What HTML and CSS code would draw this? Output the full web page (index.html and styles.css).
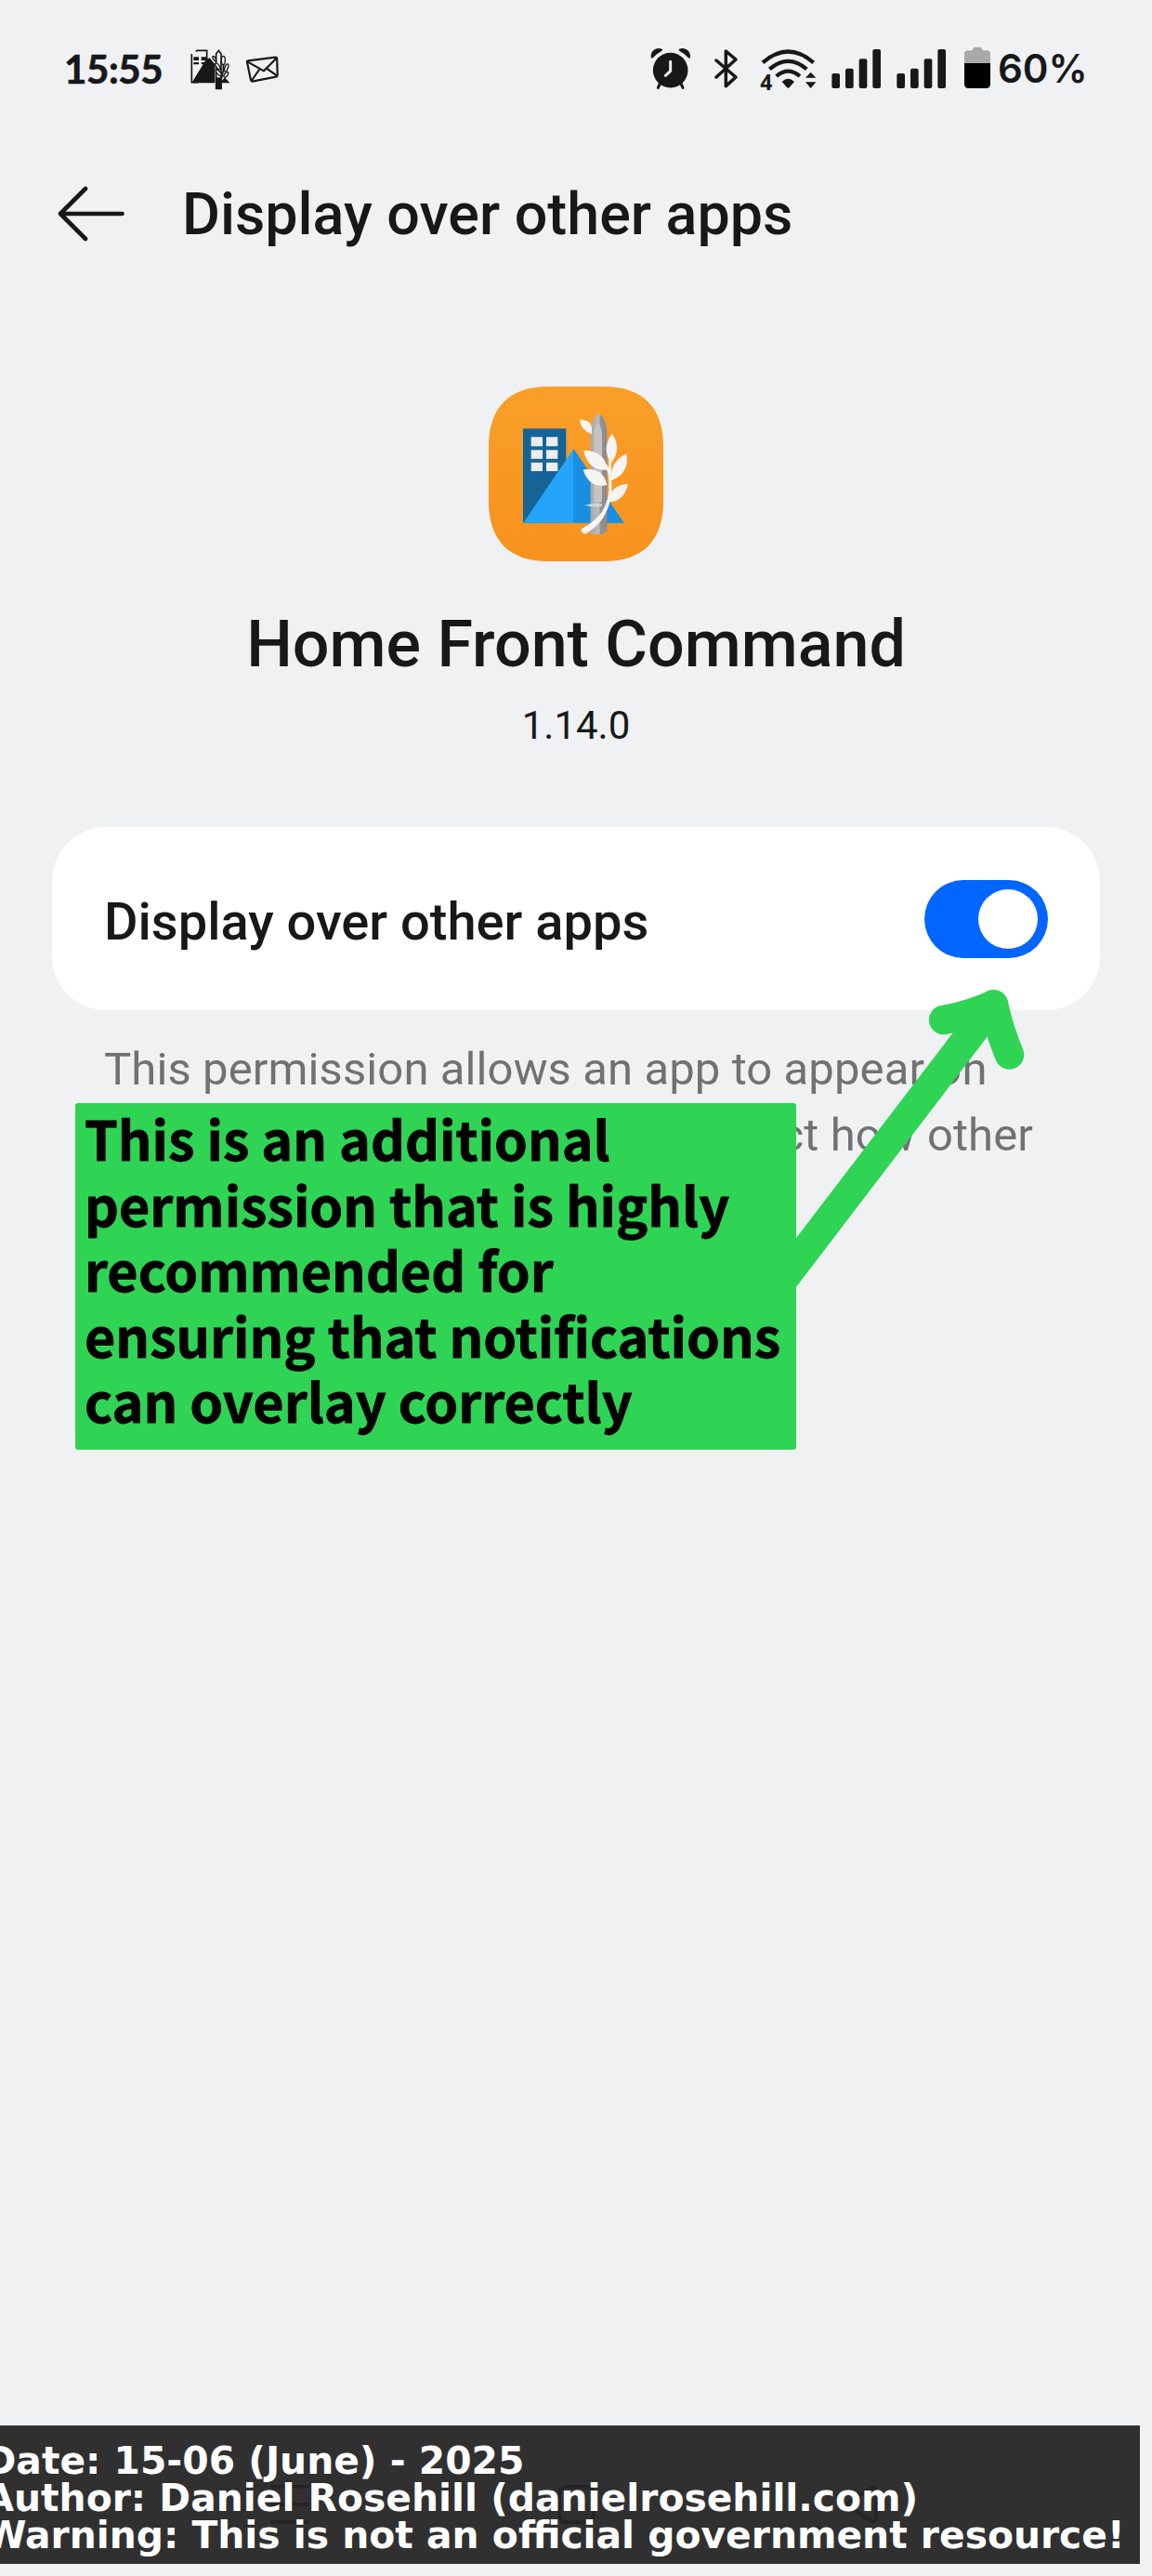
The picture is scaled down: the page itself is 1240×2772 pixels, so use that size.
FILE: index.html
```html
<!DOCTYPE html>
<html lang="en">
<head>
<meta charset="utf-8">
<title>Display over other apps</title>
<link rel="stylesheet" href="styles.css">
</head>
<body>
<main class="screen">
  <div class="status">
    <span class="time">15:55</span>
    <svg class="i-app" width="43" height="48" viewBox="495 60 129 144">
      <path d="M499 84V176H520M512 76L518 73H548V110" fill="none" stroke="#17181a" stroke-width="5"/>
      <path d="M505 94h17v11h-17zM530 94h16v11h-16zM505 111h17v7h-17zM530 111h14v7h-14z" fill="#17181a"/>
      <path d="M499 178L545 103L557 97L574 118V178ZM590 178L606 160L622 178Z" fill="#17181a"/>
      <path d="M578 196V84L586 73L594 84V196Z" fill="#f0f1f3" stroke="#17181a" stroke-width="5"/>
      <path d="M576 160h20v36h-20z" fill="#17181a"/>
      <g fill="#f0f1f3" stroke="#17181a" stroke-width="4">
        <ellipse cx="572" cy="99" rx="4" ry="8" transform="rotate(-30 572 99)"/>
        <ellipse cx="601" cy="105" rx="6" ry="14"/>
        <ellipse cx="583" cy="124" rx="5" ry="12" transform="rotate(-35 583 124)"/>
        <ellipse cx="611" cy="129" rx="5" ry="13" transform="rotate(20 611 129)"/>
        <ellipse cx="586" cy="145" rx="5" ry="12" transform="rotate(-40 586 145)"/>
        <ellipse cx="610" cy="151" rx="5" ry="10" transform="rotate(35 610 151)"/>
      </g>
      <path d="M602 116Q602 160 584 184" fill="none" stroke="#17181a" stroke-width="5"/>
    </svg>
    <svg class="i-mail" width="37" height="48" viewBox="671 60 111 144" fill="none" stroke="#17181a" stroke-width="6.5" stroke-linejoin="round">
      <path d="M680 106L768 95Q773 95 773.500 99L775 152Q775 157 770 158L694 173Q690 173 689 169L677 111Q676 107 680 106Z"/>
      <path d="M678 109L731 139L773 97M691 171L718 132M774 155L740 131"/>
    </svg>
    <svg class="i-alarm" width="44" height="48" viewBox="60 60 132 144">
      <g fill="#17181a"><circle cx="125" cy="137" r="56.500"/>
      <path d="M62 94C60 74 80 60 98 68Q101 72 96 75Q79 84 68 97Q62 101 62 94ZM189 94C191 74 171 60 153 68Q150 72 155 75Q172 84 183 97Q189 101 189 94Z"/></g>
      <path d="M91 180L85 193M159 180L165 193" stroke="#17181a" stroke-width="9" stroke-linecap="round"/>
      <path d="M125 109V139L109 154" fill="none" stroke="#f0f1f3" stroke-width="9" stroke-linecap="round" stroke-linejoin="round"/>
    </svg>
    <svg class="i-bt" width="26" height="48" viewBox="266 60 78 144" fill="none" stroke="#17181a" stroke-width="10.500" stroke-linecap="round" stroke-linejoin="round">
      <path d="M272 105L335 159L303 188V75L335 102L272 159"/>
    </svg>
    <svg class="i-wifi" width="61" height="48" viewBox="415 60 183 144">
      <g fill="none" stroke="#17181a" stroke-width="12.500">
        <path d="M424 112Q506 41 588 112"/><path d="M446 133Q506 82 566 133"/><path d="M468 156Q506 124 544 156"/>
      </g>
      <path d="M486 174Q506 155 526 174L510 192Q506 196 502 192ZM579 143L596 161H562ZM562 175H596L579 195Z" fill="#17181a"/>
      <text class="wifi-gen" x="416" y="201">4</text>
    </svg>
    <svg class="i-sig" width="54" height="48" viewBox="45 60 162 144" fill="#17181a">
      <rect x="46" y="147" width="26" height="48" rx="6"/><rect x="90" y="131" width="26" height="64" rx="6"/><rect x="134" y="100" width="26" height="95" rx="6"/><rect x="178" y="69" width="26" height="126" rx="6"/>
    </svg>
    <svg class="i-sig" width="54" height="48" viewBox="45 60 162 144" fill="#17181a">
      <rect x="46" y="147" width="26" height="48" rx="6"/><rect x="90" y="131" width="26" height="64" rx="6"/><rect x="134" y="100" width="26" height="95" rx="6"/><rect x="178" y="69" width="26" height="126" rx="6"/>
    </svg>
    <svg class="i-bat" width="28" height="48" viewBox="474 60 84 144">
      <path d="M474 114V84Q474 73 485 73H496Q500 73 501 68Q503 62 509 62H524Q530 62 531 68Q532 73 536 73H547Q558 73 558 84V114Z" fill="#a9a9aa"/>
      <path d="M474 114H558V181Q558 195 544 195H488Q474 195 474 181Z" fill="#000"/>
    </svg>
    <span class="percent">60%</span>
  </div>

  <header class="header">
    <svg width="72" height="60" viewBox="62 200 72 60" fill="none" stroke="#17181a" stroke-width="4.600" stroke-linecap="round" stroke-linejoin="round"><path d="M92 203L65 230L92 257M65 230H131.500"/></svg>
    <h1 class="title">Display over other apps</h1>
  </header>

  <section class="app">
    <svg width="188" height="188" viewBox="48 47 564 564">
      <defs>
        <linearGradient id="bg" x1="0" y1="0" x2="0" y2="1"><stop offset="0" stop-color="#fa9f2b"/><stop offset="1" stop-color="#f7921d"/></linearGradient>
        <linearGradient id="steel" x1="0" x2="1"><stop offset="0" stop-color="#aaa9a8"/><stop offset=".5" stop-color="#bcbbba"/><stop offset=".6" stop-color="#929292"/><stop offset="1" stop-color="#8a8b8c"/></linearGradient>
      </defs>
      <path d="M48 240C48 114 115 47 240 47H420C545 47 612 114 612 240V418C612 544 545 611 420 611H240C115 611 48 544 48 418Z" fill="url(#bg)"/>
      <path d="M159 183H298V487H159Z" fill="#146498"/>
      <path d="M185 210h37v30h-37zM234 210h37v30h-37zM185 252h37v28h-37zM234 252h37v28h-37zM185 292h37v28h-37zM234 292h37v28h-37z" fill="#ededee"/>
      <path d="M160 487L322 248L485 487Z" fill="#24a5fb"/>
      <path d="M322 248L485 487H322Z" fill="#188fe1"/>
      <path d="M377 524V190Q379 150 404 134Q428 150 430 190V512L412 524Z" fill="url(#steel)"/>
      <path d="M388 420V200Q390 170 401 166Q413 175 414 200V420Z" fill="#c5c4c3"/>
      <path d="M358 430Q385 422 414 425V434Q385 438 358 430Z" fill="#ccd4da"/>
      <g fill="#f6f5f4">
        <path d="M342 153Q378 156 381 178V200Q345 190 342 153Z"/>
        <path d="M446 199Q480 245 444 293Q411 248 446 199Z"/>
        <path d="M354 253Q424 253 432 316Q370 320 354 253Z"/>
        <path d="M353 315Q418 306 430 365Q372 377 353 315Z"/>
        <path d="M493 264Q504 327 444 350Q438 290 493 264Z"/>
        <path d="M498 361Q484 419 438 419Q438 365 498 361Z"/>
      </g>
      <path d="M426 300Q442 320 442 390M440 280V390" fill="none" stroke="#f6f5f4" stroke-width="8"/>
      <path d="M436 385C425 460 390 480 346 508Q348 522 362 522C400 500 434 465 446 390Z" fill="#f6f5f4"/>
    </svg>
    <h2 class="app-name">Home Front Command</h2>
    <p class="version">1.14.0</p>
  </section>

  <section class="card">
    <span class="card-label">Display over other apps</span>
    <span class="switch"><span class="knob"></span></span>
  </section>

  <div class="desc">
    <p class="desc-first">This permission allows an app to appear on</p>
    <p class="desc-last">affect how other</p>
  </div>

  <svg class="arrow" width="280" height="340" viewBox="840 1060 280 340" fill="none" stroke="#2fd455" stroke-width="32" stroke-linecap="round" stroke-linejoin="round">
    <path d="M846 1373L1069 1081"/>
    <path d="M1015.700 1097.500Q1046 1092 1069.500 1081Q1075 1107 1086.500 1135" stroke-width="31.500"/>
  </svg>
  <p class="note">This is an additional<br>permission that is highly<br>recommended for<br>ensuring that notifications<br>can overlay correctly</p>

  <footer class="credit">
    <svg class="nav" width="680" height="50" viewBox="280 2670 680 50" fill="none" stroke="#252525" stroke-width="4" stroke-linejoin="round" stroke-linecap="round">
      <path d="M293 2676H331M293 2695H331M293 2714H331"/><rect x="602" y="2676" width="37" height="38" rx="7"/><path d="M914 2692L939 2677Q943 2676 943 2680V2710Q943 2714 939 2713L914 2698Q911 2695 914 2692Z"/>
    </svg>
    <p class="credit-text">Date: 15-06 (June) - 2025<br>Author: Daniel Rosehill (danielrosehill.com)<br>Warning: This is not an official government resource!</p>
  </footer>
</main>
</body>
</html>
```
FILE: styles.css
```css
* { box-sizing: border-box; margin: 0; padding: 0; }
body { background: #f0f1f3; }
svg { display: block; flex: none; }

.screen {
  position: relative;
  width: 1240px;
  height: 2772px;
  overflow: hidden;
  background: #f0f1f3;
  color: #17181a;
  font-family: Roboto, sans-serif;
  white-space: nowrap;
}

.status {
  display: flex;
  align-items: center;
  height: 194px;
  padding: 50px 0 96px 69px;
}
.time {
  width: 136px;
  font: 700 42px/48px Lato, sans-serif;
  letter-spacing: -0.4px;
  -webkit-text-stroke: 0.7px #17181a;
}
.percent { font: 600 42px/48px Inter, sans-serif; margin-left: 8px; }
.i-mail { margin-left: 16px; }
.i-alarm { margin-left: 399px; }
.i-bt { margin-left: 25px; }
.i-wifi { margin-left: 23px; overflow: visible; }
.i-sig { margin-left: 16px; }
.i-bat { margin-left: 19px; }
.wifi-gen { font: 700 68px "Open Sans", sans-serif; fill: #17181a; }

.header {
  display: flex;
  align-items: center;
  gap: 62px;
  height: 72px;
  padding-left: 62px;
}
.title { font-size: 62.8px; font-weight: 500; line-height: 72px; margin-top: 2px; }

.app {
  display: flex;
  flex-direction: column;
  align-items: center;
  height: 624px;
  padding-top: 150px;
}
.app-name { font-size: 70px; font-weight: 500; line-height: 80px; margin-top: 49px; }
.version { font-size: 42px; line-height: 50px; margin-top: 23px; }

.card {
  display: flex;
  align-items: center;
  justify-content: space-between;
  height: 197px;
  margin: 0 56px;
  padding: 0 56px;
  border-radius: 58px;
  background: #fff;
}
.card-label { font-size: 56px; font-weight: 500; line-height: 66px; padding-top: 6px; }
.switch {
  display: flex;
  align-items: center;
  justify-content: flex-end;
  width: 133px;
  height: 84px;
  padding-right: 11px;
  border-radius: 42px;
  background: #0066ff;
}
.knob { width: 64px; height: 64px; border-radius: 50%; background: #fff; }

.desc {
  width: 1112px;
  padding: 28px 0 0 112px;
  color: #707173;
  font-size: 49px;
  letter-spacing: 0.1px;
  line-height: 71px;
}
.desc-last { text-align: right; }

.arrow { position: absolute; left: 840px; top: 1060px; }
.note {
  position: absolute;
  left: 81px;
  top: 1187px;
  width: 776px;
  height: 373px;
  padding: 2px 0 0 10px;
  border-radius: 3px;
  background: #2fd455;
  color: #000;
  font: 700 57.4px/70.6px "Noto Sans CJK SC", sans-serif;
  -webkit-text-stroke: 0.8px #000;
}

.credit {
  position: absolute;
  left: 0;
  top: 2610px;
  width: 1227px;
  height: 149px;
  padding-top: 18px;
  background: #303030;
  color: #fff;
  font: 700 40.8px/40px "DejaVu Sans", sans-serif;
}
.nav { position: absolute; left: 280px; top: 60px; }
.credit-text { position: relative; margin-left: -16.5px; }
```
